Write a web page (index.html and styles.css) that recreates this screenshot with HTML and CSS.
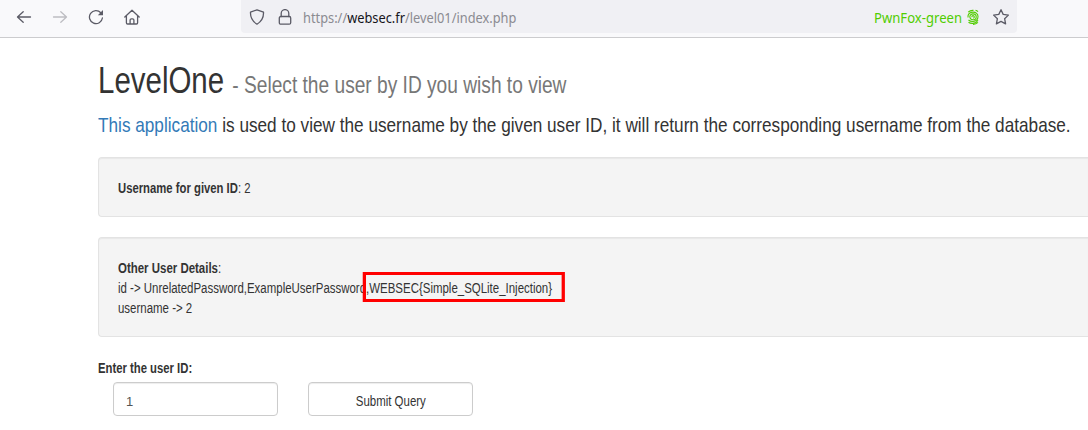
FILE: index.html
```html
<!DOCTYPE html>
<html lang="en">
<head>
<meta charset="utf-8">
<title>LevelOne</title>
<link rel="stylesheet" href="styles.css">
</head>
<body>
<header class="toolbar">
  <nav class="nav">
    <svg class="icon" viewBox="0 0 16 16"><path d="M14.500 8H1.600M7.200 2.800L1.500 8l5.700 5.200"/></svg>
    <svg class="icon disabled" viewBox="0 0 16 16"><path d="M1.500 8h12.900M8.800 2.800L14.500 8l-5.700 5.200"/></svg>
    <svg class="icon" viewBox="0 0 16 16"><path d="M12.800 3.800A6.500 6.500 0 1 0 14.400 9"/><path class="fill" d="M15 1v5.200H9.800z"/></svg>
    <svg class="icon" viewBox="0 0 16 16"><path d="M.8 8L8 1.200 15.200 8M2.400 6.800v7q0 1.200 1.200 1.200h8.800q1.200 0 1.200-1.200v-7M6.100 15v-3.900q0-1.300 1.300-1.300h1.200q1.300 0 1.300 1.300V15"/></svg>
  </nav>
  <div class="urlbar">
    <svg class="icon shield" viewBox="0 0 16 16"><path d="M8 .8l6.500 2.400q.4 7.800-6.500 12Q1.100 11 1.500 3.200z"/></svg>
    <svg class="icon lock" viewBox="0 0 16 16"><path d="M4.200 7.500V4.400a3.800 3.800 0 0 1 7.600 0v3.100"/><rect x="2.300" y="7.500" width="11.400" height="7.700" rx="1.500"/></svg>
    <span class="url">https://<b>websec.fr</b>/level01/index.php</span>
    <span class="container-name">PwnFox-green</span>
    <svg class="finger" viewBox="0 0 12 16"><path d="M1.200 3.200Q3.500 1 6.500 1.400M8.500 1.300Q10 1.600 11 2.600M1 8.500C.5 5 3 3.100 6 3.100s5 2 5 4.400-1.500 5-5 5Q3 12.500 1.500 11M2.800 8C2.800 6 4.200 4.900 6 4.900s3.200 1.200 3.200 3S8 10.800 6 10.800 3.200 9.800 2.800 8M4.800 8.300Q4.800 6.600 6 6.600t1.300 1.300q0 1.200-1.100 1.200M1.500 13.200Q3.500 14.600 6 14.300q3.500-.3 5-3M6 15.400q3 0 5-2"/></svg>
    <svg class="icon star" viewBox="0 0 16 16"><path d="M8 .7l2.200 4.700 5.200.7-3.800 3.600 1 5.200L8 12.400l-4.600 2.500 1-5.200L.6 6.100l5.200-.7z"/></svg>
  </div>
</header>
<main class="container">
  <h1 class="title narrow">LevelOne <small class="subtitle">- Select the user by ID you wish to view</small></h1>
  <p class="lead narrow"><a class="link" href="#">This application</a> is used to view the username by the given user ID, it will return the corresponding username from the database.</p>
  <section class="well"><div class="narrow tight"><strong>Username for given ID</strong>: 2</div></section>
  <section class="well">
    <div class="narrow"><strong>Other User Details</strong>:</div>
    <div class="narrow details">id -&gt; UnrelatedPassword,ExampleUserPassword<span class="flag">,WEBSEC{Simple_SQLite_Injection}</span><i class="mark"></i></div>
    <div class="narrow">username -&gt; 2</div>
  </section>
  <form class="form">
    <label class="label narrow tight" for="uid">Enter the user ID:</label>
    <div class="fields">
      <input class="control" id="uid" type="text" value="1">
      <button class="control" type="button"><span class="narrow submit">Submit Query</span></button>
    </div>
  </form>
</main>
</body>
</html>
```
FILE: styles.css
```css
* { box-sizing: border-box; }
body {
  margin: 0;
  height: 430px;
  overflow: hidden;
  background: #fff;
  color: #333;
  font: 14px/20px "Liberation Sans", sans-serif;
}
.narrow {
  width: max-content;
  transform: scaleX(.8185);
  transform-origin: 0 50%;
}
.tight { transform: scaleX(.807); }
.toolbar {
  display: flex;
  height: 38px;
  background: #f9f9fb;
  border-bottom: 1px solid #ccccce;
}
.nav {
  display: flex;
  gap: 20px;
  width: 241px;
  padding: 9px 0 0 16px;
}
.icon {
  width: 16px;
  height: 16px;
  flex: none;
  fill: none;
  stroke: #5b5b66;
  stroke-width: 1.3;
  stroke-linecap: round;
  stroke-linejoin: round;
}
.disabled { stroke: #bdbdc2; }
.fill { fill: #5b5b66; stroke: none; }
.urlbar {
  display: flex;
  align-items: center;
  width: 776px;
  height: 33px;
  padding: 1px 8px 0;
  background: #f0f0f4;
  border-radius: 0 0 4px 4px;
  font: 14px/20px "Noto Sans", sans-serif;
}
.lock { margin-left: 12px; }
.url {
  margin-left: 10px;
  padding-top: 1px;
  color: #8b8b91;
  white-space: nowrap;
  transform: scaleX(.915);
  transform-origin: 0 50%;
}
.url b { color: #15141a; font-weight: 400; }
.container-name {
  margin-left: auto;
  padding-top: 1px;
  color: #51cd00;
  transform: scaleX(.936);
  transform-origin: 100% 50%;
}
.finger {
  width: 12px;
  height: 16px;
  margin-left: 5px;
  fill: none;
  stroke: #51cd00;
  stroke-width: 1.1;
}
.star { margin-left: 14px; }
.container { padding-left: 98px; white-space: nowrap; }
.title {
  margin: 23px 0 9px;
  font-size: 36px;
  line-height: 40px;
  font-weight: 400;
}
.subtitle { color: #777; font-size: 23.4px; line-height: 1; }
.lead { margin: 0 0 18px; font-size: 21px; line-height: 29px; }
.link { color: #337ab7; text-decoration: none; }
.well {
  margin-bottom: 20px;
  padding: 20px 19px 18px;
  background: #f4f4f4;
  border: 1px solid #e3e3e3;
  border-right: 0;
  border-radius: 4px 0 0 4px;
  box-shadow: inset 0 1px 1px rgba(0, 0, 0, .05);
}
.details { position: relative; }
.mark {
  position: absolute;
  top: -6px;
  left: 299.300px;
  width: 246.800px;
  height: 30px;
  border: solid #f00;
  border-width: 3px 4px;
}
.label { display: block; padding-top: 1px; font-weight: 700; }
.fields { display: flex; gap: 30px; padding: 4px 0 0 15px; }
.control {
  width: 165px;
  height: 34px;
  padding: 8px 12px 4px;
  color: #333;
  background: #fff;
  border: 1px solid #ccc;
  border-radius: 4px;
  box-shadow: inset 0 1px 1px rgba(0, 0, 0, .075);
  font: inherit;
}
input.control { font-size: 13px; color: #555; }
.submit { display: inline-block; transform-origin: 50% 50%; }
```
